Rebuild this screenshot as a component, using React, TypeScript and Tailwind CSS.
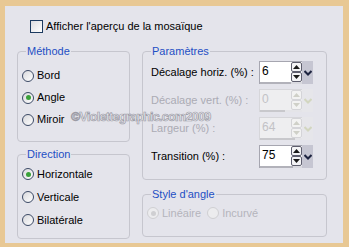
import type { ReactNode } from "react";

function Radio({ checked, disabled }: { checked?: boolean; disabled?: boolean }) {
  return (
    <span
      className={`grid h-[12px] w-[12px] shrink-0 place-items-center rounded-full border ${
        disabled ? "border-[#cfcfd2] bg-[#ececee]" : "border-[#3c4a66] bg-linear-to-br from-[#d8d8dc] to-white"
      }`}
    >
      {checked ? (
        <span className={`h-[5px] w-[5px] rounded-full ${disabled ? "bg-[#cfcfd2]" : "bg-[#3aa13a]"}`} />
      ) : null}
    </span>
  );
}

function RadioRow({ label, checked, h }: { label: string; checked?: boolean; h: string }) {
  return (
    <div className={`flex ${h} items-center gap-[3px] pl-[4px]`}>
      <Radio checked={checked} />
      <span>{label}</span>
    </div>
  );
}

function Group({ title, className, children }: { title: string; className: string; children: ReactNode }) {
  return (
    <fieldset className={`rounded-[4px] border border-[#c6c6ce] ${className}`}>
      <legend className="ml-[8px] px-[1px] leading-[13px] text-[#1e4fc4]">{title}</legend>
      {children}
    </fieldset>
  );
}

function Arrow({ up, disabled }: { up?: boolean; disabled?: boolean }) {
  return (
    <div
      className={`grid h-[10px] w-[11px] place-items-center rounded-[2px] border ${
        disabled ? "border-[#d4d4d8] bg-[#f2f2f2]" : "border-[#5e5e6e] bg-[#f4f4f6]"
      }`}
    >
      <svg width="7" height="4" viewBox="0 0 7 4">
        <path d={up ? "M0 4 L3.5 0 L7 4 Z" : "M0 0 L3.5 4 L7 0 Z"} fill={disabled ? "#cfd0c8" : "#1a1a1a"} />
      </svg>
    </div>
  );
}

function Spinner({ value, disabled, bar }: { value: string; disabled?: boolean; bar: string }) {
  return (
    <div className="flex h-[23px]">
      <div className={`flex w-[43px] flex-col border-t border-l ${disabled ? "border-[#d6d6da]" : "border-[#a6a6b0]"}`}>
        <div className={`flex flex-1 items-center ${disabled ? "bg-[#eeeef0]" : "bg-white"}`}>
          <span className={`-mt-[3px] pl-[2px] text-[12px] ${disabled ? "text-[#c2c2c6]" : "text-black"}`}>{value}</span>
          <div className="ml-auto flex flex-col self-stretch">
            <Arrow up disabled={disabled} />
            <Arrow disabled={disabled} />
          </div>
        </div>
        <div className="flex h-[3px]">
          <div className={`${bar} ${disabled ? "bg-[#c8c8cc]" : "bg-[#b2b2ba]"}`} />
          <div className={`flex-1 ${disabled ? "bg-[#e4e4e8]" : "bg-[#dadae0]"}`} />
        </div>
      </div>
      <div className={`grid w-[11px] place-items-center ${disabled ? "bg-[#e6e6ea]" : "bg-[#c6c6d2]"}`}>
        <svg width="8" height="6" viewBox="0 0 8 6">
          <path d="M0.5 1 L4 4.5 L7.5 1" stroke={disabled ? "#d2d6c0" : "#1e2440"} strokeWidth="2" fill="none" />
        </svg>
      </div>
    </div>
  );
}

function ParamRow({ label, value, disabled, bar }: { label: string; value: string; disabled?: boolean; bar: string }) {
  return (
    <div className="flex h-[28px] items-center pl-[8px]">
      <span className={`w-[108px] ${disabled ? "text-[#ababb4]" : "text-black"}`}>{label}</span>
      <Spinner value={value} disabled={disabled} bar={bar} />
    </div>
  );
}

export default function App() {
  return (
    <div className="h-[247px] w-[349px] bg-[#e8c894] pt-[6px] pr-[6px] pb-[4px] pl-[5px] font-['Liberation_Sans',Arial,sans-serif] text-[11px] text-black">
      <div className="relative h-full bg-[#e4e4eb] pl-[12px]">
        <div className="flex items-center gap-[3px] pt-[12px] pl-[13px]">
          <span className="h-[13px] w-[13px] border border-[#1c3a60] bg-linear-to-br from-[#dcdce0] to-white" />
          <span>Afficher l'aperçu de la mosaïque</span>
        </div>

        <div className="mt-[10px] flex gap-[12px]">
          <div className="flex w-[113px] flex-col">
            <Group title="Méthode" className="h-[97px]">
              <div className="pt-[7px]">
                <RadioRow label="Bord" h="h-[22px]" />
                <RadioRow label="Angle" h="h-[22px]" checked />
                <RadioRow label="Miroir" h="h-[22px]" />
              </div>
            </Group>
            <Group title="Direction" className="mt-[6px] h-[91px]">
              <div className="pt-[2px]">
                <RadioRow label="Horizontale" h="h-[23px]" checked />
                <RadioRow label="Verticale" h="h-[23px]" />
                <RadioRow label="Bilatérale" h="h-[23px]" />
              </div>
            </Group>
          </div>

          <div className="flex w-[185px] flex-col">
            <Group title="Paramètres" className="h-[135px]">
              <div className="pt-[1px]">
                <ParamRow label="Décalage horiz. (%) :" value="6" bar="w-[31px]" />
                <ParamRow label="Décalage vert. (%) :" value="0" disabled bar="w-[25px]" />
                <ParamRow label="Largeur (%) :" value="64" disabled bar="w-[35px]" />
                <ParamRow label="Transition (%) :" value="75" bar="w-[33px]" />
              </div>
            </Group>
            <Group title="Style d'angle" className="mt-[8px] h-[49px]">
              <div className="flex h-[22px] items-center pt-[3px] pl-[4px] text-[#b4b4bc]">
                <Radio checked disabled />
                <span className="ml-[3px]">Linéaire</span>
                <span className="ml-[6px]">
                  <Radio disabled />
                </span>
                <span className="ml-[3px]">Incurvé</span>
              </div>
            </Group>
          </div>
        </div>

        <div className="pointer-events-none absolute top-[103px] left-[66px] text-[12.5px] leading-[16px] font-bold tracking-[-0.7px] text-[#eeeef4] [-webkit-text-stroke:0.7px_#9c9ca6]">
          ©Violettegraphic.com2009
        </div>
      </div>
    </div>
  );
}
